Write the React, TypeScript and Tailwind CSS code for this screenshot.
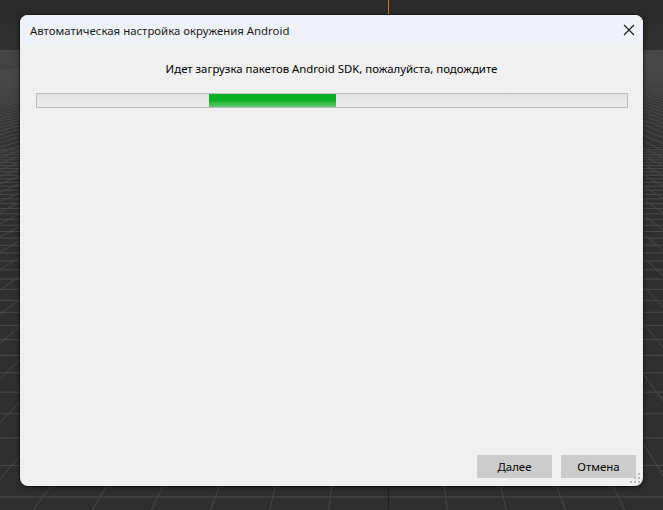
import React from "react";

const HORIZON = 25;
const VX = 388;

// Perspective floor grid of the 3D viewport behind the dialog
function ViewportGrid() {
  const rows: number[] = [];
  for (let n = 14; n <= 260; n++) rows.push(HORIZON + 6608 / n);
  const cols: number[] = [];
  for (let k = -70; k <= 70; k++) if (k !== 0) cols.push(k);
  return (
    <svg className="absolute inset-0" width={663} height={510} viewBox="0 0 663 510">
      <rect x={0} y={0} width={663} height={510} fill="#2f2f2f" />
      <rect x={0} y={0} width={663} height={HORIZON} fill="#2b2b2b" />
      {rows.map((y, i) => (
        <line
          key={`h${i}`}
          x1={0}
          x2={663}
          y1={y}
          y2={y}
          stroke="#4a4a4a"
          strokeWidth={1}
          strokeOpacity={i < 40 ? 1 : 0.45}
        />
      ))}
      {cols.map((k) => (
        <line
          key={`v${k}`}
          x1={VX + 0.122 * k * 8}
          y1={HORIZON + 8}
          x2={VX + 0.122 * k * (510 - HORIZON)}
          y2={510}
          stroke="#494949"
          strokeWidth={1}
        />
      ))}
      <line x1={VX + 0.5} y1={HORIZON} x2={VX + 0.5} y2={510} stroke="#1f1f1f" strokeWidth={1} />
      <line x1={VX + 0.5} y1={0} x2={VX + 0.5} y2={HORIZON} stroke="#c87424" strokeWidth={1} />
    </svg>
  );
}

function ResizeGrip() {
  const dots = [
    [8, 0],
    [4, 4],
    [8, 4],
    [0, 8],
    [4, 8],
    [8, 8],
  ];
  return (
    <svg className="absolute right-[2px] bottom-[2px]" width={11} height={11} viewBox="0 0 11 11">
      {dots.map(([x, y], i) => (
        <rect key={i} x={x} y={y} width={2} height={2} fill="#b9b9b9" />
      ))}
    </svg>
  );
}

export default function App() {
  const font = { fontFamily: '"Segoe UI", "Noto Sans", "Open Sans", sans-serif' };
  return (
    <div className="relative w-[663px] h-[510px] overflow-hidden bg-[#2f2f2f]" style={font}>
      <ViewportGrid />

      {/* Dialog window */}
      <div className="absolute left-[20px] top-[15px] w-[623px] h-[471px] flex flex-col rounded-[8px] overflow-hidden bg-[#f0f0f0] shadow-[0_0_0_1px_rgba(0,0,0,0.35),0_2px_6px_rgba(0,0,0,0.45)]">
        <div className="h-[30px] shrink-0 flex items-center justify-between bg-[#eef2f7] pl-[10px] pr-[2px]">
          <span className="text-[11.4px] text-[#1a1a1a] leading-none pt-[1px]">
            Автоматическая настройка окружения Android
          </span>
          <svg width={24} height={24} viewBox="0 0 24 24">
            <path d="M7 7 L17 17 M17 7 L7 17" stroke="#1a1a1a" strokeWidth={1.1} fill="none" />
          </svg>
        </div>

        <div className="relative flex-1 flex flex-col">
          <div className="pt-[15px] text-center text-[11.4px] leading-[18px] text-black">
            Идет загрузка пакетов Android SDK, пожалуйста, подождите
          </div>

          <div className="ml-[16px] mr-[15px] mt-[15px] h-[15px] border border-[#bcbcbc] bg-gradient-to-b from-[#e2e2e2] via-[#e8e8e8] to-[#ececec] relative">
            <div className="absolute left-[172px] top-0 bottom-0 w-[127px] bg-gradient-to-b from-[#06b025] via-[#06b025] to-[#5ccb72]" />
          </div>

          <div className="flex-1" />

          <div className="flex justify-end gap-[9px] pr-[7px] pb-[8px]">
            <button className="w-[75px] h-[23px] bg-[#cccccc] text-[11.4px] text-black leading-none">
              Далее
            </button>
            <button className="w-[75px] h-[23px] bg-[#cccccc] text-[11.4px] text-black leading-none">
              Отмена
            </button>
          </div>

          <ResizeGrip />
        </div>
      </div>
    </div>
  );
}
